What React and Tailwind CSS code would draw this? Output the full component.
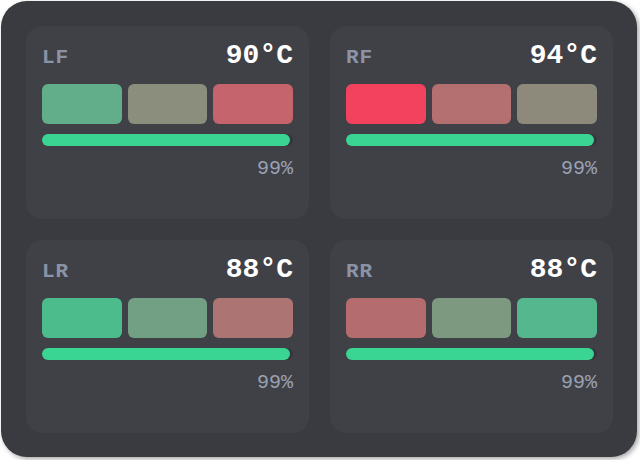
import React from "react";

const WHEELS = [
  { id: "LF", temp: 90, wear: 99, zones: ["#62ad8a", "#8b8e7c", "#c6646d"] },
  { id: "RF", temp: 94, wear: 99, zones: ["#f2425e", "#b46f70", "#8e8a7b"] },
  { id: "LR", temp: 88, wear: 99, zones: ["#4cbc8c", "#72a085", "#ac7473"] },
  { id: "RR", temp: 88, wear: 99, zones: ["#b56c6f", "#7d9980", "#55b78d"] },
];

const TireCard = ({ wheel }) => (
  <div className="flex h-[193px] flex-col rounded-2xl bg-[#404147] px-4 pt-4">
    <div className="flex items-baseline justify-between">
      <span className="text-[21px] font-bold leading-none tracking-[1px] text-[#8b93a6]">
        {wheel.id}
      </span>
      <span className="text-[28px] font-bold leading-none text-white">
        {wheel.temp}°C
      </span>
    </div>

    {/* inner / middle / outer tread temps */}
    <div className="mt-[14px] grid grid-cols-3 gap-[6px]">
      {wheel.zones.map((c, i) => (
        <div key={i} className="h-10 rounded-md" style={{ backgroundColor: c }} />
      ))}
    </div>

    <div className="mt-[10px] h-3 rounded-full bg-[#35363b]">
      <div
        className="h-3 rounded-full bg-[#3ad493]"
        style={{ width: `${wheel.wear}%` }}
      />
    </div>

    <div className="mt-[13px] text-right text-[20px] leading-none text-[#9aa1b2]">
      {wheel.wear}%
    </div>
  </div>
);

export default function App() {
  return (
    <div className="h-[460px] w-[640px] bg-white pl-px pt-px font-['Liberation_Mono',monospace]">
      <div className="grid h-[456px] w-[636px] grid-cols-2 content-start gap-[21px] rounded-[26px] bg-[#3a3b40] pl-[25px] pr-[24px] pt-[25px] shadow-[2px_2px_5px_rgba(0,0,0,0.35)]">
        {WHEELS.map((w) => (
          <TireCard key={w.id} wheel={w} />
        ))}
      </div>
    </div>
  );
}
